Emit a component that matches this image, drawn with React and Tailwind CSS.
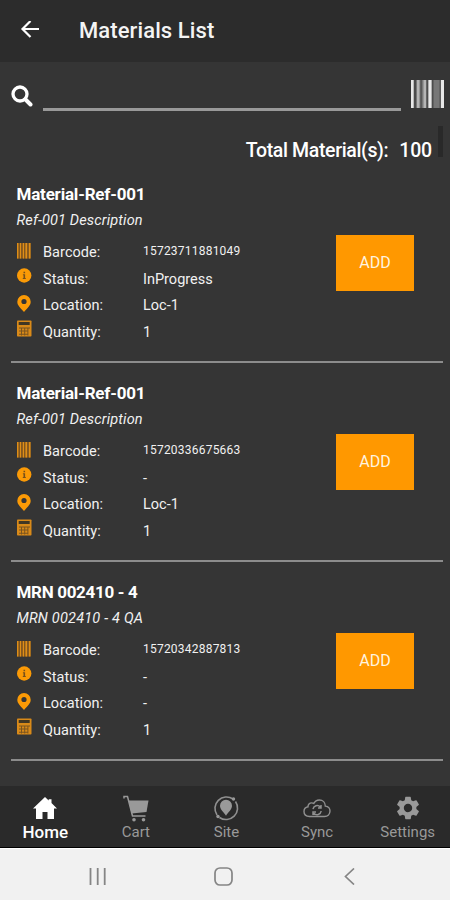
import React from "react";

const materials = [
  { title: "Material-Ref-001", titleSpacing: "tracking-[-0.2px]", descriptionSpacing: "tracking-[0.15px]", description: "Ref-001 Description", barcode: "15723711881049", status: "InProgress", location: "Loc-1", quantity: "1" },
  { title: "Material-Ref-001", titleSpacing: "tracking-[-0.2px]", descriptionSpacing: "tracking-[0.15px]", description: "Ref-001 Description", barcode: "15720336675663", status: "-", location: "Loc-1", quantity: "1" },
  { title: "MRN 002410 - 4", titleSpacing: "tracking-[-0.32px]", descriptionSpacing: "tracking-[0.2px]", description: "MRN 002410 - 4 QA", barcode: "15720342887813", status: "-", location: "-", quantity: "1" },
];

function BackArrow() {
  return (
    <svg className="h-[20px] w-[20px]" viewBox="0 0 20 20" fill="none" stroke="#fff" strokeWidth="2.2">
      <path d="M19 8H3M10.500 0L2.500 8l8 8" />
    </svg>
  );
}

function SearchIcon() {
  return (
    <svg className="h-[22px] w-[22px]" viewBox="0 0 22 22" fill="none" stroke="#fff">
      <circle cx="9" cy="9" r="7" strokeWidth="3.3" />
      <path d="M14.500 14.500l5 5" strokeWidth="4" strokeLinecap="round" />
    </svg>
  );
}

function ScanIcon() {
  return (
    <svg className="h-[28px] w-[33px]" viewBox="0 0 33 28">
      <path fill="#777" d="M0 0h33v28H0z" />
      <path fill="#e8e8e8" d="M0 0h2.6v28H0zM17.5 0h3v28h-3zM30 0h3v28h-3z" />
      <path fill="#b5b5b5" d="M6 0h2.5v28H6zM12.5 0H15v28h-2.5z" />
      <path fill="#4c4c4c" d="M3 0h2v28H3zM9.5 0h1.2v28H9.5zM15.6 0h1.4v28h-1.4zM21 0h1.5v28H21zM28.6 0h1v28h-1z" />
    </svg>
  );
}

function BarcodeIcon() {
  return (
    <svg className="h-[16px] w-[14px]" viewBox="0 0 14 16">
      <path fill="#9c651a" d="M0 0h13.5v15.5H0z" />
      <path fill="#de8e18" d="M0 0h1.4v15.5H0zM3 0h1v15.5H3zM6 0h1v15.5H6zM8.5 0h1.5v15.5H8.5zM12 0h1.5v15.5H12z" />
      <path fill="#6f4d24" d="M1.8 0h.8v15.5h-.8zM4.5 0h.7v15.5h-.7zM7.4 0h.7v15.5h-.7zM10.5 0h.9v15.5h-.9z" />
    </svg>
  );
}

function InfoIcon() {
  return (
    <svg className="h-[15px] w-[15px]" viewBox="0 0 15 15">
      <circle cx="7.2" cy="7.5" r="7.2" fill="#fb9a06" />
      <path fill="#76501c" d="M6.5 3.800h1.600v1.500H6.5zM5.900 6.300h2.200v3.700h.7v1H5.800v-1h.7V7.300h-.6z" />
    </svg>
  );
}

function PinIcon() {
  return (
    <svg className="h-[17px] w-[14px]" viewBox="0 0 14 17">
      <path fill="#fb9a06" fillRule="evenodd" d="M7 0a6.7 6.7 0 0 0-6.7 6.7C.3 10.6 3.5 12.6 7 17c3.500-4.400 6.700-6.400 6.700-10.300A6.700 6.700 0 0 0 7 0zm0 3.900a2.600 2.600 0 1 1 0 5.200 2.600 2.600 0 0 1 0-5.200z" />
    </svg>
  );
}

function CalculatorIcon() {
  return (
    <svg className="h-[17px] w-[15px]" viewBox="0 0 15 17">
      <rect x="0" y=".5" width="14.500" height="16" rx=".8" fill="#d98a19" />
      <path fill="#413724" d="M1.700 2h11v3h-11z" />
      <path fill="#7a5420" d="M2 7.500h11v1H2zM2 10.600h8.500v1H2zM2 13.800h8.500v1H2zM4 7.500h1v8H4zM7.200 7.500h1v8h-1zM10.400 7.500h1v8h-1z" />
    </svg>
  );
}

function Field({ icon, label, value, small }) {
  return (
    <div className="flex h-[26.8px] items-center">
      <span className="flex w-[26.5px] items-center">{icon}</span>
      <span className="w-[100px] text-[14.5px] leading-5 tracking-[0.06px]">{label}</span>
      <span className={small ? "-mt-[3px] text-[12px] leading-5 tracking-[0.22px]" : "text-[14.5px] leading-5"}>{value}</span>
    </div>
  );
}

function MaterialCard({ item }) {
  return (
    <li className="mr-[7px] ml-[11px] flex h-[199px] border-b-2 border-[#8c8c8c] pl-[5.5px]">
      <div className="w-[319.5px] pt-[18.5px]">
        <h2 className={`text-[17px] leading-[22px] font-bold text-white ${item.titleSpacing}`}>{item.title}</h2>
        <p className={`mt-[6px] mb-[9px] text-[14.5px] leading-5 italic ${item.descriptionSpacing}`}>{item.description}</p>
        <Field icon={<span className="-mt-[4px]"><BarcodeIcon /></span>} label="Barcode:" value={item.barcode} small />
        <Field icon={<span className="-mt-[8px]"><InfoIcon /></span>} label="Status:" value={item.status} />
        <Field icon={<span className="-mt-[5px]"><PinIcon /></span>} label="Location:" value={item.location} />
        <Field icon={<span className="-mt-[9px]"><CalculatorIcon /></span>} label="Quantity:" value={item.quantity} />
      </div>
      <button className="mt-[70.5px] h-[56px] w-[78px] bg-[#ff9800] pt-px text-[16px] text-[#fff3df]">ADD</button>
    </li>
  );
}

function HomeIcon() {
  return (
    <svg className="h-[23px] w-[24px]" viewBox="0 0 24 23" fill="#fff">
      <path d="M12 0L0 11.500h3V22h6.500v-7h5v7H21V11.500h3L18.500 6V2.200h-2.800v1.300z" />
    </svg>
  );
}

function CartIcon() {
  return (
    <svg className="h-[27px] w-[27px]" viewBox="0 0 27 27">
      <path fill="none" stroke="#999" strokeWidth="1.500" d="M2 3.500v-2h3.500l5 19.500h13" />
      <path fill="#999" d="M6.500 5.500h20l-2 11.500-15 1.500z" />
      <circle cx="12" cy="24.700" r="1.800" fill="#999" />
      <circle cx="21.500" cy="24.700" r="1.800" fill="#999" />
    </svg>
  );
}

function SiteIcon() {
  return (
    <svg className="h-[26px] w-[26px]" viewBox="0 0 26 26">
      <path fill="none" stroke="#909090" strokeWidth="1.600" d="M20 4A11.500 11.500 0 0 0 4 20M6.500 22.500A11.500 11.500 0 0 0 22.500 6.500" />
      <circle cx="20.500" cy="4" r="1.700" fill="#999" />
      <circle cx="5" cy="21.500" r="1.700" fill="#999" />
      <path fill="#999" d="M13 4.800a6 6 0 0 0-6 6c0 3.700 3.500 6 6 10 2.500-4 6-6.300 6-10a6 6 0 0 0-6-6z" />
    </svg>
  );
}

function SyncIcon() {
  return (
    <svg className="h-[19px] w-[28px]" viewBox="0 0 28 19" fill="none" stroke="#909090" strokeWidth="1.400">
      <path d="M6.500 17.500C3 17.500 1 15.300 1 12.500c0-2.500 1.700-4.300 4-4.700-.1-2.300 1.500-3.900 3.700-3.900.8 0 1.500.2 2.100.6C12 2.200 14 1 16.300 1c3.500 0 6 2.600 6 6.100 2.800.3 4.700 2.300 4.700 5 0 3-2.200 5.400-5.500 5.400z" />
      <path d="M10 10.200a4.200 4.200 0 0 1 7.300-2.200M18 6v3h-3M18.200 12a4.200 4.200 0 0 1-7.300 2.200M10 16v-3h3" strokeWidth="1.500" />
    </svg>
  );
}

function SettingsIcon() {
  return (
    <svg className="h-[28px] w-[28px]" viewBox="0 0 24 24" fill="#999">
      <path d="M19.140 12.940c.04-.3.060-.61.060-.94 0-.32-.02-.64-.07-.94l2.030-1.580a.49.49 0 0 0 .12-.61l-1.920-3.320a.488.488 0 0 0-.59-.22l-2.390.96c-.5-.38-1.030-.7-1.620-.94l-.36-2.540a.484.484 0 0 0-.48-.41h-3.840c-.24 0-.43.17-.47.41l-.36 2.540c-.59.24-1.130.57-1.620.94l-2.390-.96c-.22-.08-.47 0-.59.22L2.740 8.870c-.12.21-.08.47.12.61l2.030 1.580c-.05.3-.09.63-.09.94s.02.64.07.94l-2.030 1.580a.49.49 0 0 0-.12.61l1.920 3.320c.12.22.37.29.59.22l2.390-.96c.5.38 1.030.7 1.620.94l.36 2.540c.05.24.24.41.48.41h3.840c.24 0 .44-.17.47-.41l.36-2.540c.59-.24 1.130-.56 1.620-.94l2.390.96c.22.08.47 0 .59-.22l1.920-3.320c.12-.22.07-.47-.12-.61l-2.010-1.580zM12 15.600A3.610 3.610 0 0 1 8.400 12c0-1.980 1.620-3.600 3.600-3.600s3.600 1.620 3.600 3.600-1.620 3.600-3.600 3.600z" />
    </svg>
  );
}

const tabs = [
  { label: "Home", icon: <HomeIcon />, style: "text-[17px] font-medium text-white" },
  { label: "Cart", icon: <CartIcon />, style: "text-[15px] text-[#999]" },
  { label: "Site", icon: <SiteIcon />, style: "text-[15px] text-[#999]" },
  { label: "Sync", icon: <SyncIcon />, style: "text-[15px] text-[#999]" },
  { label: "Settings", icon: <SettingsIcon />, style: "text-[15px] text-[#999]" },
];

export default function App() {
  return (
    <div className="flex h-[900px] w-[450px] flex-col overflow-hidden bg-[#353535] font-['Roboto',sans-serif] text-[#f1f1f1]">
      <header className="flex h-[62px] shrink-0 items-center bg-[#2c2c2c] pl-[20px]">
        <BackArrow />
        <h1 className="ml-[39px] text-[22px] leading-7 font-medium tracking-[0.1px] text-[#f4f4f4]">Materials List</h1>
      </header>
      <div className="flex h-[64px] shrink-0 pl-[10.5px]">
        <div className="mt-[22.5px]"><SearchIcon /></div>
        <div className="ml-[10px] h-[49px] w-[358px] border-b-[3px] border-[#999]" />
        <div className="mt-[18px] ml-[10px]"><ScanIcon /></div>
      </div>
      <div className="flex h-[38px] shrink-0 justify-end">
        <p className="mt-[13px] mr-[6px] flex gap-[11px] text-[19.5px] leading-6 font-medium tracking-[-0.36px] text-white">
          <span>Total Material(s):</span>
          <span className="tracking-[-0.2px]">100</span>
        </p>
        <div className="mr-[7px] h-[31px] w-[5px] bg-[#292929]" />
      </div>
      <ul className="flex-1">
        {materials.map((item) => <MaterialCard key={item.barcode} item={item} />)}
      </ul>
      <nav className="h-[62px] shrink-0 overflow-hidden border-b border-black bg-[#2a2a2a]">
        <div className="grid w-[453px] grid-cols-5">
          {tabs.map((tab) => (
            <div key={tab.label} className="flex flex-col items-center">
              <div className="mt-[8px] flex h-[28px] items-center">{tab.icon}</div>
              <span className={`leading-5 ${tab.style}`}>{tab.label}</span>
            </div>
          ))}
        </div>
      </nav>
      <footer className="flex h-[52px] shrink-0 items-center border-t border-white bg-[#f1f1f1] pt-[3px] pl-[89px]">
        <svg className="h-[17px] w-[18px]" viewBox="0 0 18 17" stroke="#858585" strokeWidth="1.800"><path d="M1.500 0v17M8.700 0v17M15.700 0v17" /></svg>
        <svg className="ml-[107px] h-[19px] w-[19px]" viewBox="0 0 19 19" fill="none" stroke="#858585" strokeWidth="1.700"><rect x="1" y="1" width="17" height="17" rx="5" /></svg>
        <svg className="ml-[111px] h-[17px] w-[11px]" viewBox="0 0 11 17" fill="none" stroke="#858585" strokeWidth="1.700"><path d="M10 .5L1.500 8.500l8.500 8" /></svg>
      </footer>
    </div>
  );
}
